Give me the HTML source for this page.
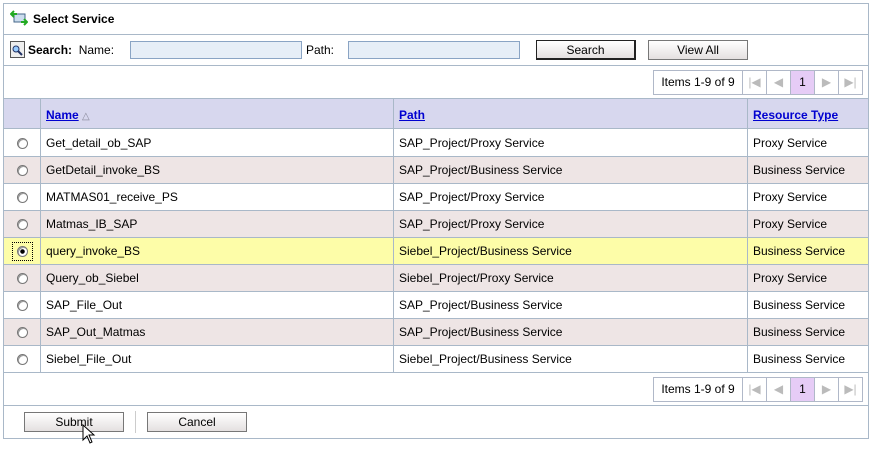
<!DOCTYPE html><html><head><style>
*{margin:0;padding:0;box-sizing:border-box}
body{width:872px;height:449px;background:#fff;font-family:"Liberation Sans",sans-serif;font-size:12px;color:#000;position:relative;overflow:hidden}
.a{position:absolute}
.hl{position:absolute;left:3px;width:866px;height:1px;background:#a9b8c8}
.vl{position:absolute;width:1px;background:#a9b8c8}
.btn{position:absolute;height:20px;border:1px solid #555;background:linear-gradient(#fff,#e4e0e0);text-align:center;line-height:18px;font-size:12px}
.inp{position:absolute;height:18px;border:1px solid #8aa4c4;background:#e6eef7}
.row{position:absolute;left:4px;width:864px;height:27px;line-height:27px}
.row span{position:absolute}
.rad{position:absolute;left:13px;top:8px;width:11px;height:11px;border-radius:50%;border:1px solid #777;background:#fff;box-shadow:inset 1px 1px 0 #999}
a{color:#0000d0;font-weight:bold;text-decoration:underline}
.pg{position:absolute;top:70px;height:25px;border:1px solid #b0b8c8;line-height:23px;text-align:center;color:#bbb}
</style></head><body>
<div class="a" style="left:3px;top:3px;width:866px;height:436px;border:1px solid #a9b8c8"></div>
<svg class="a" style="left:10px;top:10px" width="18" height="16"><rect x="4" y="4" width="11" height="8" fill="#cde" stroke="#468"/><path d="M1 4h6M4 1l-3 3 3 3" stroke="#2a2" stroke-width="2" fill="none"/><path d="M11 12h6M14 9l3 3-3 3" stroke="#2a2" stroke-width="2" fill="none"/></svg>
<div class="a" style="left:33px;top:12px;font-weight:bold">Select Service</div>
<div class="hl" style="top:34px"></div>
<svg class="a" style="left:10px;top:41px" width="15" height="17"><rect x="0.5" y="0.5" width="14" height="16" fill="#eee" stroke="#555"/><circle cx="6" cy="8" r="3" fill="#9cf" stroke="#236"/><path d="M8 10l4 4" stroke="#236" stroke-width="2"/></svg>
<div class="a" style="left:28px;top:43px"><b>Search:</b>&nbsp; Name:</div>
<div class="inp" style="left:130px;top:41px;width:172px"></div>
<div class="a" style="left:306px;top:43px">Path:</div>
<div class="inp" style="left:348px;top:41px;width:172px"></div>
<div class="btn" style="left:536px;top:40px;width:100px;border-color:#222;border-width:1px 2px 2px 1px">Search</div>
<div class="btn" style="left:648px;top:40px;width:100px;border-color:#777">View All</div>
<div class="hl" style="top:65px"></div>
<div class="pg" style="left:653px;width:90px;color:#000">Items 1-9 of 9</div>
<div class="pg" style="left:742px;width:25px">|◀</div><div class="pg" style="left:766px;width:25px">◀</div>
<div class="pg" style="left:790px;width:25px;background:#e6ccf6;color:#000">1</div>
<div class="pg" style="left:814px;width:25px">▶</div><div class="pg" style="left:838px;width:25px">▶|</div>
<div class="a" style="left:4px;top:98px;width:864px;height:31px;background:#d7d7ee;border-top:1px solid #a9b8c8;border-bottom:1px solid #a9b8c8"></div>
<div class="a" style="left:46px;top:108px"><a>Name</a> <span style="color:#889;font-size:10px">△</span></div>
<div class="a" style="left:399px;top:108px"><a>Path</a></div>
<div class="a" style="left:753px;top:108px"><a>Resource Type</a></div>
<div class="row" style="top:130px"><i class="rad"></i><span style="left:42px">Get_detail_ob_SAP</span><span style="left:395px">SAP_Project/Proxy Service</span><span style="left:749px">Proxy Service</span></div>
<div class="row" style="top:157px;background:#eee5e5"><i class="rad"></i><span style="left:42px">GetDetail_invoke_BS</span><span style="left:395px">SAP_Project/Business Service</span><span style="left:749px">Business Service</span></div>
<div class="row" style="top:184px"><i class="rad"></i><span style="left:42px">MATMAS01_receive_PS</span><span style="left:395px">SAP_Project/Proxy Service</span><span style="left:749px">Proxy Service</span></div>
<div class="row" style="top:211px;background:#eee5e5"><i class="rad"></i><span style="left:42px">Matmas_IB_SAP</span><span style="left:395px">SAP_Project/Proxy Service</span><span style="left:749px">Proxy Service</span></div>
<div class="row" style="top:238px;background:#fdfda8"><i class="a" style="left:8px;top:4px;width:21px;height:19px;border:1px dotted #000"></i><i class="rad" style="background:radial-gradient(#000 2px,#fff 2.5px)"></i><span style="left:42px">query_invoke_BS</span><span style="left:395px">Siebel_Project/Business Service</span><span style="left:749px">Business Service</span></div>
<div class="row" style="top:265px;background:#eee5e5"><i class="rad"></i><span style="left:42px">Query_ob_Siebel</span><span style="left:395px">Siebel_Project/Proxy Service</span><span style="left:749px">Proxy Service</span></div>
<div class="row" style="top:292px"><i class="rad"></i><span style="left:42px">SAP_File_Out</span><span style="left:395px">SAP_Project/Business Service</span><span style="left:749px">Business Service</span></div>
<div class="row" style="top:319px;background:#eee5e5"><i class="rad"></i><span style="left:42px">SAP_Out_Matmas</span><span style="left:395px">SAP_Project/Business Service</span><span style="left:749px">Business Service</span></div>
<div class="row" style="top:346px"><i class="rad"></i><span style="left:42px">Siebel_File_Out</span><span style="left:395px">Siebel_Project/Business Service</span><span style="left:749px">Business Service</span></div>
<div class="hl" style="top:156px"></div><div class="hl" style="top:183px"></div><div class="hl" style="top:210px"></div><div class="hl" style="top:237px"></div><div class="hl" style="top:264px"></div><div class="hl" style="top:291px"></div><div class="hl" style="top:318px"></div><div class="hl" style="top:345px"></div><div class="hl" style="top:372px"></div>
<div class="vl" style="left:40px;top:98px;height:275px"></div>
<div class="vl" style="left:393px;top:98px;height:275px"></div>
<div class="vl" style="left:747px;top:98px;height:275px"></div>
<div class="pg" style="left:653px;top:377px;width:90px;color:#000">Items 1-9 of 9</div>
<div class="pg" style="left:742px;top:377px;width:25px">|◀</div><div class="pg" style="left:766px;top:377px;width:25px">◀</div>
<div class="pg" style="left:790px;top:377px;width:25px;background:#e6ccf6;color:#000">1</div>
<div class="pg" style="left:814px;top:377px;width:25px">▶</div><div class="pg" style="left:838px;top:377px;width:25px">▶|</div>
<div class="hl" style="top:405px"></div>
<div class="btn" style="left:24px;top:412px;width:100px;border-color:#777">Submit</div>
<div class="vl" style="left:135px;top:411px;height:22px;background:#ccc"></div>
<div class="btn" style="left:147px;top:412px;width:100px;border-color:#777">Cancel</div>
<svg class="a" style="left:82px;top:424px" width="14" height="22"><path d="M1 1v15l4-4 3 7 2-1-3-7h5z" fill="#fff" stroke="#000"/></svg>
</body></html>
